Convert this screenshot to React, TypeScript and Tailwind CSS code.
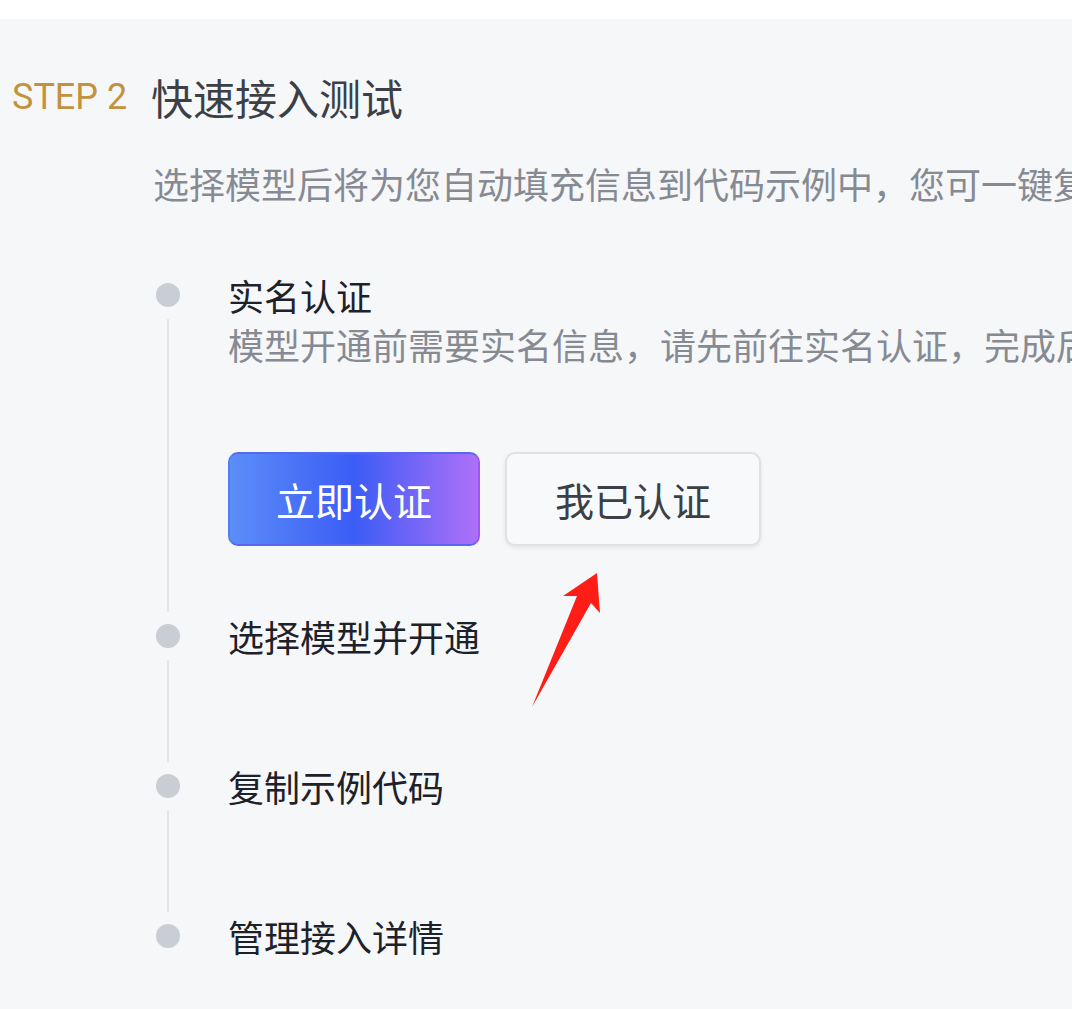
import React from "react";

type Step = {
  title: string;
  desc?: string;
  actions?: boolean;
};

const steps: Step[] = [
  { title: "实名认证", desc: "模型开通前需要实名信息，请先前往实名认证，完成后点击我已认证继续", actions: true },
  { title: "选择模型并开通" },
  { title: "复制示例代码" },
  { title: "管理接入详情" },
];

const cjk = { fontFamily: '"Noto Sans CJK SC", "Noto Sans", sans-serif' };

function TimelineItem({ step, last }: { step: Step; last: boolean }) {
  return (
    <div className="flex">
      <div className="flex w-[75px] shrink-0 flex-col items-start">
        <div className="ml-[3px] mt-3 h-6 w-6 rounded-full bg-[#c9cdd4]" />
        {!last && <div className="ml-[14px] mt-3 w-[2px] flex-1 bg-[#e5e6eb]" />}
      </div>
      <div className={last ? "pb-10" : step.actions ? "pb-[66px]" : "pb-[102px]"}>
        <div className="text-[36px] leading-[48px] text-[#1d2129]">{step.title}</div>
        {step.desc && (
          <div className="whitespace-nowrap text-[36px] leading-[50px] text-[#868a93]">{step.desc}</div>
        )}
        {step.actions && (
          <div className="mt-[83px] flex gap-[25px]">
            <button className="h-[94px] w-[252px] rounded-[10px] border-2 border-l-[#4f7ff2] border-r-[#9b58ef] border-t-[#5668f2] border-b-[#5668f2] bg-[linear-gradient(90deg,#5b8ef8_0%,#3b5cf6_50%,#ae70f8_100%)] text-[39px] text-white">
              立即认证
            </button>
            <button className="h-[94px] w-[256px] rounded-[10px] border-2 border-[#dfe1e6] bg-[#f8f9fb] text-[39px] text-[#3c3f46] shadow-[0_2px_4px_rgba(0,0,0,0.08)]">
              我已认证
            </button>
          </div>
        )}
      </div>
    </div>
  );
}

export default function App() {
  return (
    <div className="relative h-[1009px] w-full overflow-hidden bg-white" style={cjk}>
      <div className="mt-[19px] h-full bg-[#f6f7f9] pt-[50px]">
        <div className="grid grid-cols-[153px_1fr]">
          <div
            className="pl-3 text-[36px] leading-[56px] text-[#c4923e]"
            style={{ fontFamily: 'Roboto, "Noto Sans", sans-serif' }}
          >
            STEP 2
          </div>
          <div className="-ml-[2px] text-[42px] leading-[56px] text-[#3c3f46]">快速接入测试</div>
          <div />
          <div className="mt-8 whitespace-nowrap text-[36px] leading-[52px] text-[#868a93]">
            选择模型后将为您自动填充信息到代码示例中，您可一键复制代码进行接入测试
          </div>
          <div />
          <div className="mt-[62px]">
            {steps.map((s, i) => (
              <TimelineItem key={s.title} step={s} last={i === steps.length - 1} />
            ))}
          </div>
        </div>
      </div>

      {/* annotation arrow */}
      <svg className="pointer-events-none absolute left-0 top-0" width="1072" height="1009" viewBox="0 0 1072 1009">
        <polygon points="532,707 577,596 563,596 597,573 600,613 591,603" fill="#ff1d17" />
      </svg>
    </div>
  );
}
